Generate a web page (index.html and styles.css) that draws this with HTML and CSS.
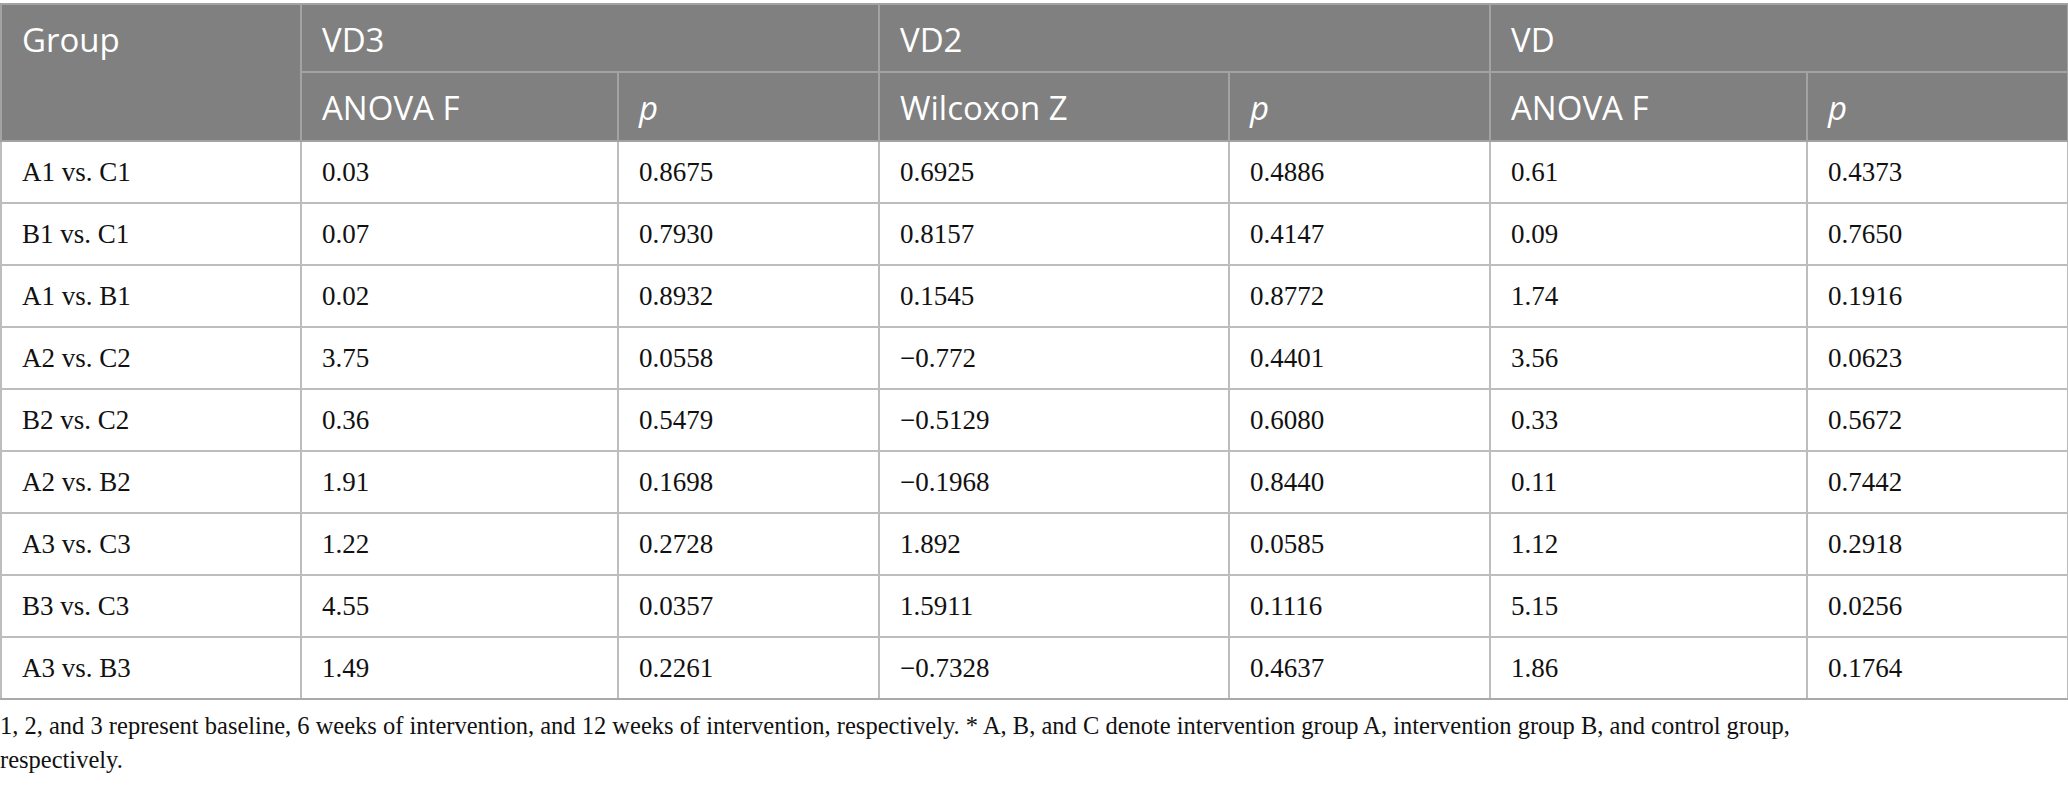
FILE: index.html
```html
<!DOCTYPE html>
<html lang="en">
<head>
<meta charset="utf-8">
<title>Table</title>
<link rel="stylesheet" href="styles.css">
</head>
<body>
<div class="wrap">
<table class="data">
  <colgroup>
    <col class="c-group">
    <col class="c-f">
    <col class="c-p">
    <col class="c-z">
    <col class="c-p">
    <col class="c-f">
    <col class="c-p">
  </colgroup>
  <thead>
    <tr class="h1">
      <th rowspan="2" class="grp">Group</th>
      <th colspan="2">VD3</th>
      <th colspan="2">VD2</th>
      <th colspan="2">VD</th>
    </tr>
    <tr class="h2">
      <th>ANOVA F</th>
      <th><i>p</i></th>
      <th>Wilcoxon Z</th>
      <th><i>p</i></th>
      <th>ANOVA F</th>
      <th><i>p</i></th>
    </tr>
  </thead>
  <tbody>
    <tr><td>A1 vs. C1</td><td>0.03</td><td>0.8675</td><td>0.6925</td><td>0.4886</td><td>0.61</td><td>0.4373</td></tr>
    <tr><td>B1 vs. C1</td><td>0.07</td><td>0.7930</td><td>0.8157</td><td>0.4147</td><td>0.09</td><td>0.7650</td></tr>
    <tr><td>A1 vs. B1</td><td>0.02</td><td>0.8932</td><td>0.1545</td><td>0.8772</td><td>1.74</td><td>0.1916</td></tr>
    <tr><td>A2 vs. C2</td><td>3.75</td><td>0.0558</td><td>&minus;0.772</td><td>0.4401</td><td>3.56</td><td>0.0623</td></tr>
    <tr><td>B2 vs. C2</td><td>0.36</td><td>0.5479</td><td>&minus;0.5129</td><td>0.6080</td><td>0.33</td><td>0.5672</td></tr>
    <tr><td>A2 vs. B2</td><td>1.91</td><td>0.1698</td><td>&minus;0.1968</td><td>0.8440</td><td>0.11</td><td>0.7442</td></tr>
    <tr><td>A3 vs. C3</td><td>1.22</td><td>0.2728</td><td>1.892</td><td>0.0585</td><td>1.12</td><td>0.2918</td></tr>
    <tr><td>B3 vs. C3</td><td>4.55</td><td>0.0357</td><td>1.5911</td><td>0.1116</td><td>5.15</td><td>0.0256</td></tr>
    <tr><td>A3 vs. B3</td><td>1.49</td><td>0.2261</td><td>&minus;0.7328</td><td>0.4637</td><td>1.86</td><td>0.1764</td></tr>
  </tbody>
</table>
<p class="note">1, 2, and 3 represent baseline, 6 weeks of intervention, and 12 weeks of intervention, respectively. * A, B, and C denote intervention group A, intervention group B, and control group, respectively.</p>
</div>
</body>
</html>
```

FILE: styles.css
```css
html, body {
  margin: 0;
  padding: 0;
  background: #ffffff;
}

.wrap {
  padding-top: 3px;
}

.data {
  width: 2068px;
  table-layout: fixed;
  border-collapse: collapse;
  font-family: "Liberation Serif", "Times New Roman", serif;
}

.c-group { width: 300px; }
.c-f { width: 317px; }
.c-p { width: 261px; }
.c-z { width: 350px; }

.data th {
  background: #808080;
  color: #ffffff;
  font-family: "Open Sans", "Noto Sans", sans-serif;
  font-weight: 400;
  font-size: 33px;
  text-align: left;
  padding: 4px 20px 0 20px;
  height: 62px;
  line-height: 62px;
  border: 2px solid #a3a3a3;
  vertical-align: top;
}

.data th i {
  font-style: italic;
}

.data .h2 th {
  height: 63px;
}

.data td {
  font-size: 27px;
  color: #111111;
  padding: 0 20px;
  height: 60px;
  line-height: 30px;
  border: 2px solid #bdbdbd;
  vertical-align: middle;
}

.data tbody tr:last-child td {
  border-bottom-color: #a9a9a9;
}

.note {
  margin: 9px 0 0 0;
  max-width: 1860px;
  font-family: "Liberation Serif", "Times New Roman", serif;
  font-size: 24.5px;
  line-height: 34px;
  color: #111111;
}
```
